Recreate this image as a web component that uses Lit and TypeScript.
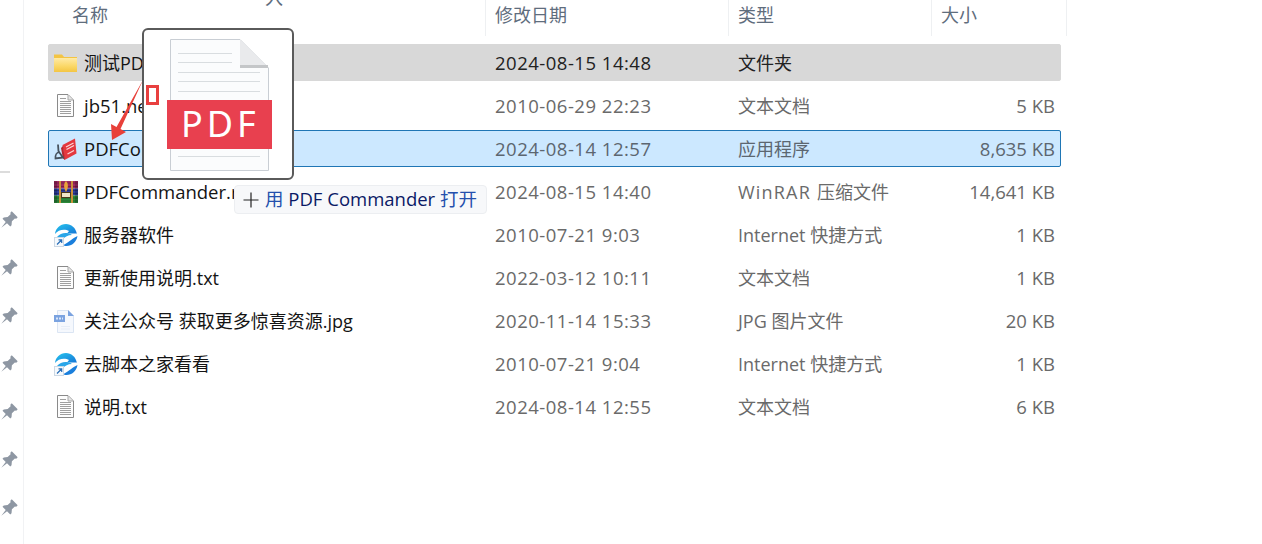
import { LitElement, html, css, svg } from "lit";
import { customElement } from "lit/decorators.js";

const txtIcon = svg`<svg class="ic" viewBox="0 0 24 24"><path d="M3.500.500H14L19.500 6V22.500H3.500Z" fill="#fdfdfd" stroke="#8a8a8a"/><path d="M14 1V6H19" fill="#e6e6e6" stroke="#a8a8a8"/><path d="M6 4.500H12M6 7.500H17M6 9.500H17M6 11.500H17M6 13.500H17M6 15.500H17M6 17.500H17M6 19.500H17" stroke="#9f9f9f" stroke-width="1"/></svg>`;
const folderIcon = svg`<svg class="ic" viewBox="0 0 24 24"><defs><linearGradient id="fg" x1="0" y1="0" x2="0" y2="1"><stop offset="0" stop-color="#ffeaa6"/><stop offset=".6" stop-color="#fbd765"/><stop offset="1" stop-color="#f3c543"/></linearGradient></defs><path d="M0 3.500H8L10 6H23V21H0Z" fill="#f3c443"/><path d="M0 7H23V21H0Z" fill="url(#fg)"/></svg>`;
const exeIcon = svg`<svg class="ic" viewBox="0 0 24 24"><path d="M8.500 8L21 1.500 22.500 16.500 10.500 23Z" fill="#e4383f"/><path d="M9 9L7 11 9 21.500 11 23Z" fill="#b8262e"/><path d="M12 10L19.500 6M12.500 12.500L20 8.500M13.500 17L20 13.500" stroke="#fbd6d8" stroke-width="1.300"/><path d="M4 7.500L4.500 14.500M1.500 21.500C1 18 3 15.500 5 15L9 20.500Z" fill="none" stroke="#47525e" stroke-width="1.800"/></svg>`;
const rarIcon = svg`<svg class="ic" viewBox="0 0 24 24"><rect y="1" width="24" height="7.500" fill="#a02a62"/><rect y="8.500" width="24" height="7" fill="#2e3f9e"/><rect y="15.500" width="24" height="7.500" fill="#2c8a3a"/><path d="M0 3H24M0 6.500H24M0 10.500H24M0 13.500H24M0 18H24M0 21H24" stroke="#000" stroke-opacity=".25" stroke-width="1"/><rect x="0" y="1" width="3" height="22" fill="#000" fill-opacity=".2"/><rect x="21" y="1" width="3" height="22" fill="#000" fill-opacity=".2"/><rect x="5" y="1" width="2" height="22" fill="#c9913a"/><rect x="17" y="1" width="2" height="22" fill="#c9913a"/><rect x="7.500" y="12.500" width="9" height="5" fill="#efe6c8" stroke="#4a3a1c"/><path d="M12 1C9.500 3 9.500 8 12 12 14.500 8 14.500 3 12 1Z" fill="#e8a33a"/></svg>`;
const linkIcon = svg`<svg class="ic" viewBox="0 0 24 24"><defs><linearGradient id="eg" x1="0" y1="0" x2="1" y2="1"><stop offset="0" stop-color="#27c6ee"/><stop offset="1" stop-color="#1473d6"/></linearGradient></defs><path d="M23 11.500C22 4.500 17 1 12 1 6 1 1.500 5.500 1 11 4 6.500 11 5.500 15 8L13 10.500H23Z" fill="url(#eg)"/><path d="M3 14C7 9.500 13 9 18 12 14 12 10 14 8 17L3 14Z" fill="#2aa6e8"/><path d="M23.500 13C22.500 19 18 23 12.500 23 11 23 9.500 22.500 9 22 13 21 17 16 23.500 13Z" fill="#1a7fdc"/><rect x=".5" y="14.500" width="9" height="9" fill="#f6f9fc" stroke="#ccd8e4"/><path d="M3 21.500L7.500 17M4.500 16.800H7.700V20" fill="none" stroke="#2a6fb8" stroke-width="1.200"/></svg>`;
const jpgIcon = svg`<svg class="ic" viewBox="0 0 24 24"><path d="M3.500 1.500H14L19.500 7V23.500H3.500Z" fill="#f5f8fd" stroke="#dbe5f3"/><path d="M14 1V7H20Z" fill="#7ba3e0"/><rect x="0" y="6" width="11" height="7" fill="#7ba3e0"/><path d="M2 9.500H9" stroke="#dbe7fa" stroke-width="2" stroke-dasharray="2 1"/><path d="M7 17.500H16M7 20H16" stroke="#e6edf7"/></svg>`;

const rows = [
  { n: "测试PDF", d: "2024-08-15 14:48", t: "文件夹", s: "", i: folderIcon, c: "gray", l: "" },
  { n: "jb51.net.txt", d: "2010-06-29 22:23", t: "文本文档", s: "5 KB", i: txtIcon, c: "", l: "lat" },
  { n: "PDFCommander.exe", d: "2024-08-14 12:57", t: "应用程序", s: "8,635 KB", i: exeIcon, c: "sel", l: "lat" },
  { n: "PDFCommander.rar", d: "2024-08-15 14:40", t: "", s: "14,641 KB", i: rarIcon, c: "", l: "lat" },
  { n: "服务器软件", d: "2010-07-21 9:03", t: "Internet 快捷方式", s: "1 KB", i: linkIcon, c: "", l: "" },
  { n: "更新使用说明.txt", d: "2022-03-12 10:11", t: "文本文档", s: "1 KB", i: txtIcon, c: "", l: "" },
  { n: "关注公众号 获取更多惊喜资源.jpg", d: "2020-11-14 15:33", t: "JPG 图片文件", s: "20 KB", i: jpgIcon, c: "", l: "" },
  { n: "去脚本之家看看", d: "2010-07-21 9:04", t: "Internet 快捷方式", s: "1 KB", i: linkIcon, c: "", l: "" },
  { n: "说明.txt", d: "2024-08-14 12:55", t: "文本文档", s: "6 KB", i: txtIcon, c: "", l: "" },
];

const pin = svg`<svg class="pin" viewBox="0 0 16 16"><g transform="rotate(45 8 8)"><path d="M3.800 -1.500H12.200V.500L11 1.300V5.500L13.500 8.500V10.300H8.900L8 17.500 7.100 10.300H2.500V8.500L5 5.500V1.300L3.800 .500Z" fill="#8e97a3"/></g></svg>`;

@customElement("app-root")
export class AppRoot extends LitElement {
  static styles = css`
    :host {
      display: flex;
      position: relative;
      width: 1262px;
      height: 544px;
      overflow: hidden;
      background: #fff;
      font-family: "Open Sans", "Noto Sans CJK SC", sans-serif;
      font-size: 18.5px;
    }
    .side {
      width: 24px;
      flex: none;
      box-sizing: border-box;
      border-right: 1px solid #f1f2f4;
      display: flex;
      flex-direction: column;
      padding-top: 171px;
    }
    .rule { width: 10px; height: 2px; background: #dcdcdc; margin-bottom: 40px; }
    .pins { display: flex; flex-direction: column; gap: 32px; }
    .pin { width: 16px; height: 16px; display: block; overflow: visible; }
    .main { width: 1019px; margin-left: 24px; flex: none; }
    .head, .row { display: grid; grid-template-columns: 438px 243px 203px 1fr; align-items: center; }
    .head { height: 36px; margin-bottom: 8px; color: #5f6d7d; font-size: 18px; }
    .head div { height: 36px; box-sizing: border-box; line-height: 30px; padding-left: 9px; border-right: 1px solid #eef0f2; }
    .head div:first-child { padding-left: 24px; }
    .list { width: 1013px; display: flex; flex-direction: column; gap: 6px; }
    .row { height: 37px; box-sizing: border-box; border: 1px solid transparent; border-radius: 2px; grid-template-columns: 437px 243px 203px 1fr; color: #6a6a6a; line-height: 34px; }
    .row.gray { background: #d8d8d8; border-color: #d8d8d8; color: #222; }
    .row.sel { background: #cce8ff; border-color: #1f76b5; color: #5c6670; }
    .name { display: flex; align-items: center; gap: 6px; padding-left: 5px; color: #141414; white-space: nowrap; font-size: 18px; }
    .name .lat { font-size: 18.5px; }
    .ic { width: 24px; height: 24px; flex: none; display: block; }
    .date { padding-left: 9px; letter-spacing: 0.5px; }
    .type { padding-left: 9px; font-size: 18px; }
    .wide { letter-spacing: 1.2px; margin-right: 6px; }
    .size { text-align: right; padding-right: 5px; }
    .frag { position: absolute; left: 265px; top: 0; width: 20px; height: 6px; overflow: hidden; color: #5f6d7d; font-size: 18px; line-height: 6px; }
    .frag span { display: block; margin-top: -11px; line-height: 18px; }
    .arrow { position: absolute; left: 100px; top: 70px; width: 50px; height: 75px; }
    .card {
      position: absolute; left: 142px; top: 28px; width: 152px; height: 152px; box-sizing: border-box;
      background: #fff; border: 2px solid #5a5a5a; border-radius: 6px;
    }
    .pdf { display: block; width: 148px; height: 148px; }
    .pdf text { font-family: "Noto Sans", sans-serif; font-size: 36px; font-weight: 400; fill: #fff; letter-spacing: 4px; }
    .mark { position: absolute; left: 146px; top: 85px; width: 13px; height: 20px; box-sizing: border-box; border: 3px solid #e8403f; background: #fff; }
    .tip {
      position: absolute; left: 234px; top: 185px; width: 253px; height: 29px; box-sizing: border-box;
      display: flex; align-items: center; gap: 6px; padding: 0 0 3px 8px;
      background: #f7f8fa; border: 1px solid #eceef1; border-radius: 4px;
      color: #0b1a66; font-size: 18.5px; white-space: nowrap;
    }
    .tip svg { width: 16px; height: 16px; flex: none; margin-top: 3px; }
    .tip b { font-weight: 400; color: #2450ad; }
  `;

  render() {
    return html`
      <div class="side">
        <div class="rule"></div>
        <div class="pins">${[0, 1, 2, 3, 4, 5, 6].map(() => pin)}</div>
      </div>
      <div class="main">
        <div class="head">
          <div>名称</div><div>修改日期</div><div>类型</div><div>大小</div>
        </div>
        <div class="list">
          ${rows.map(
            (r) => html`<div class="row ${r.c}">
              <div class="name">${r.i}<span class=${r.l}>${r.n}</span></div>
              <div class="date">${r.d}</div>
              <div class="type">${r.t || html`<span class="wide">WinRAR</span>压缩文件`}</div>
              <div class="size">${r.s}</div>
            </div>`
          )}
        </div>
      </div>
      <div class="frag"><span>入</span></div>
      <svg class="arrow" viewBox="0 0 50 75"><path d="M43 10L20.500 59 26 62 12 70 11 54 16.500 57Z" fill="#e8403a"/></svg>
      <div class="card">
        <svg class="pdf" viewBox="0 0 148 148">
          <path d="M26.500 9.500H96L124.500 38V140.500H26.500Z" fill="#fbfcfd" stroke="#c9ced4"/>
          <path d="M96 9.500V38H124.500Z" fill="#e9eaec"/>
          <path d="M96 36.500H124" stroke="#c4c6c8" stroke-width="3"/>
          <path d="M34 23.500H88M34 32.500H88M34 42.500H116M34 51.500H116M34 61.500H116M34 126.500H116" stroke="#d9dde0"/>
          <rect x="23" y="70" width="105" height="49" fill="#e8404f"/>
          <text x="37" y="107">PDF</text>
        </svg>
      </div>
      <div class="mark"></div>
      <div class="tip">
        <svg viewBox="0 0 16 16"><path d="M8 .500V15.500M.500 8H15.500" stroke="#222" stroke-width="1.200"/></svg>
        <span><b>用</b> PDF Commander <b>打开</b></span>
      </div>
    `;
  }
}
